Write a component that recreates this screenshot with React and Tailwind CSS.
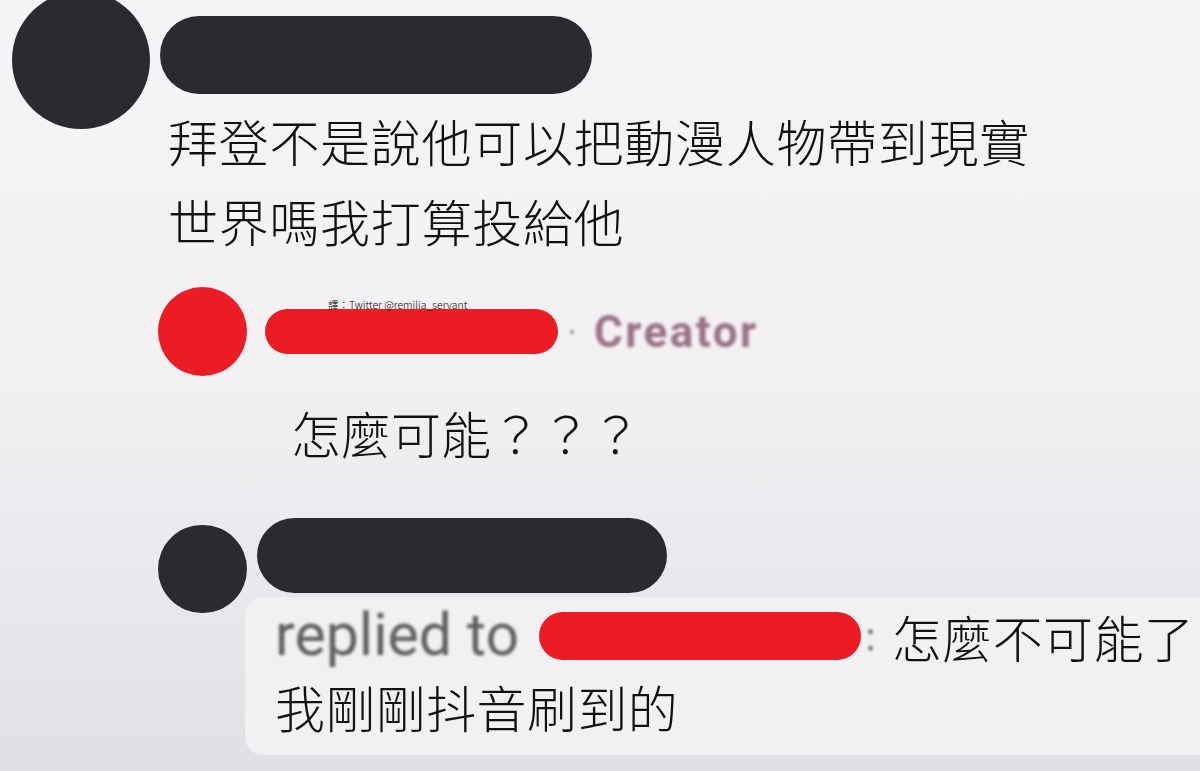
import React from 'react';

const cjk = "font-['Noto_Sans_CJK_TC','Noto_Sans_CJK_SC',sans-serif] font-light";

export default function App() {
  return <div className="relative w-[1200px] h-[771px] overflow-hidden bg-gradient-to-b from-[#f6f4f7] via-[#f2f0f3] to-[#e2e0e4] text-[#111111]">
      {/* 第一則留言 */}
      <div className="flex">
        <div className="ml-[12px] -mt-[9px] w-[138px] h-[138px] shrink-0 rounded-full bg-[#2a2b30] blur-[0.6px]" />
        <div className="ml-[10px] flex flex-col">
          <div className="mt-[16px] w-[432px] h-[78px] rounded-full bg-[#2a2b30] blur-[0.6px]" />
          <p className={`${cjk} mt-[6px] pl-[8px] text-[50px] leading-[80px] tracking-[0.7px] whitespace-nowrap`}>
            拜登不是說他可以把動漫人物帶到現實
            <br />
            世界嗎我打算投給他
          </p>
        </div>
      </div>

      {/* 作者回覆 */}
      <div className="mt-[27px] ml-[158px] flex items-center">
        <div className="w-[89px] h-[89px] shrink-0 rounded-full bg-[#ec1c24]" />
        <div className="ml-[18px] w-[293px] h-[45px] rounded-full bg-[#ec1c24]" />
        <span className="ml-[10px] text-[30px] leading-none text-[#9a9a9a] blur-[1px]">·</span>
        <span className="ml-[18px] font-['Roboto',sans-serif] font-bold text-[44px] leading-none tracking-[2.5px] text-[#9b7284] blur-[1.4px]">
          Creator
        </span>
      </div>
      <p className={`${cjk} mt-[16px] ml-[291px] text-[50px] leading-[80px]`}>怎麼可能？？？</p>

      {/* 第二則回覆 */}
      <div className="mt-[46px] ml-[158px] flex items-start">
        <div className="mt-[7px] w-[89px] h-[88px] shrink-0 rounded-full bg-[#2a2b30] blur-[0.6px]" />
        <div className="ml-[10px] w-[410px] h-[75px] rounded-full bg-[#2a2b30] blur-[0.6px]" />
      </div>
      <div className="-mt-[16px] ml-[245px] pt-[4px] pb-[14px] pl-[30px] rounded-l-[18px] bg-[#f1f0f2]">
        <div className="flex items-center h-[70px] whitespace-nowrap">
          <span className="font-['Roboto',sans-serif] text-[59px] leading-none text-[#606062] blur-[1.4px] -mt-[4px]">
            replied to
          </span>
          <span className="ml-[20px] w-[322px] h-[48px] rounded-full bg-[#ec1c24] blur-[0.4px]" />
          <span className="ml-[4px] text-[40px] leading-none text-[#8a8a8a] blur-[1px]">:</span>
          <span className={`${cjk} ml-[16px] text-[50px] leading-none tracking-[0.4px]`}>怎麼不可能了</span>
        </div>
        <p className={`${cjk} text-[50px] leading-[70px] tracking-[0.4px]`}>我剛剛抖音刷到的</p>
      </div>

      {/* 譯者浮水印 */}
      <span className={`absolute left-[328px] top-[300px] ${cjk} text-[10.5px] leading-none text-black`}>
        譯：Twitter @remilia_servant
      </span>
    </div>;
}
